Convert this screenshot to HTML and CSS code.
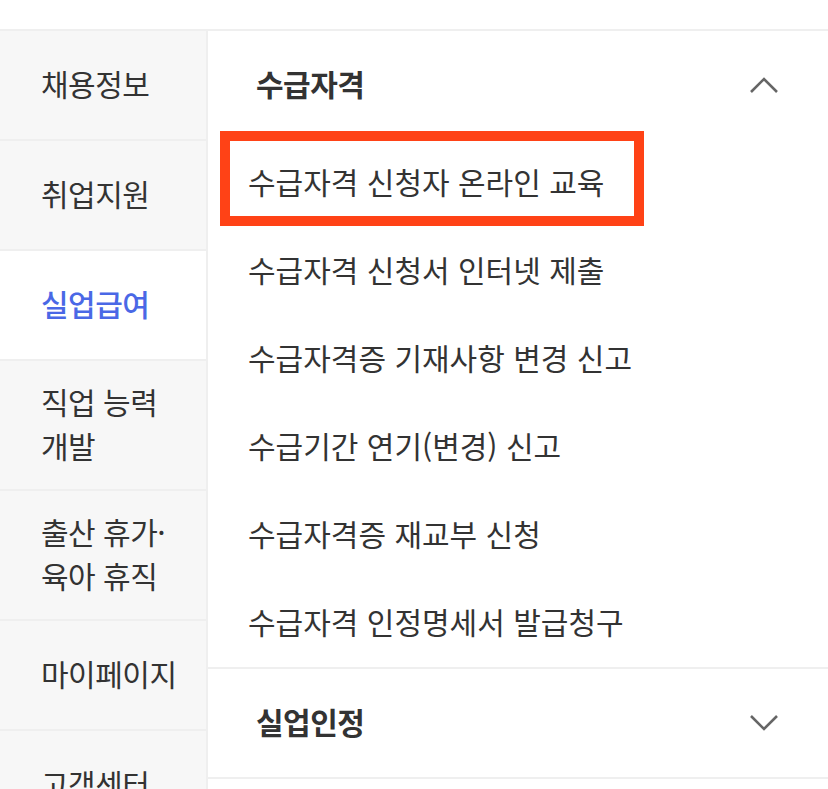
FILE: index.html
```html
<!DOCTYPE html>
<html lang="ko">
<head>
  <meta charset="UTF-8" />
  <meta name="viewport" content="width=device-width, initial-scale=1.0" />
  <title>실업급여 메뉴</title>
  <link rel="stylesheet" href="styles.css">
</head>
<body>
<div class="topbar"></div>
<div class="menu">
  <ul class="side">
    <li>채용정보</li>
    <li>취업지원</li>
    <li class="on">실업급여</li>
    <li>직업 능력<br>개발</li>
    <li>출산 휴가·<br>육아 휴직</li>
    <li>마이페이지</li>
    <li>고객센터</li>
  </ul>
  <div class="panel">
    <section class="group">
      <div class="group-head">
        <span>수급자격</span>
        <svg class="chev" width="30" height="18" viewBox="0 0 30 18"><polyline points="2,16 15,3 28,16" /></svg>
      </div>
      <ul class="sub">
        <li class="mark">수급자격 신청자 온라인 교육<span class="box"></span></li>
        <li>수급자격 신청서 인터넷 제출</li>
        <li>수급자격증 기재사항 변경 신고</li>
        <li>수급기간 연기(변경) 신고</li>
        <li>수급자격증 재교부 신청</li>
        <li>수급자격 인정명세서 발급청구</li>
      </ul>
    </section>
    <section class="group">
      <div class="group-head">
        <span>실업인정</span>
        <svg class="chev" width="30" height="18" viewBox="0 0 30 18"><polyline points="2,2 15,15 28,2" /></svg>
      </div>
    </section>
  </div>
</div>
</body>
</html>
```

FILE: styles.css
```css
* { box-sizing: border-box; margin: 0; padding: 0; }
html, body { width: 100%; height: 100%; overflow: hidden; background: #fff; }
body { font-family: "Noto Sans CJK KR", "Noto Sans", sans-serif; color: #333; }
ul { list-style: none; }

.topbar { height: 31px; border-bottom: 2px solid #efefef; }

.menu { display: flex; }

.side {
  width: 208px; flex: none;
  background: #f7f7f7;
  border-right: 2px solid #efefef;
}
.side li {
  display: flex; align-items: center;
  min-height: 110px;
  padding: 18px 0 22px 41px;
  border-bottom: 2px solid #efefef;
  font-size: 30px; line-height: 44px;
  letter-spacing: -0.5px;
}
.side li.on { background: #fff; color: #4a68e6; font-weight: 500; }

.panel { flex: 1; }
.group { border-bottom: 2px solid #efefef; }
.group-head {
  display: flex; justify-content: space-between; align-items: center;
  height: 108px;
  padding: 0 49px 0 48px;
  font-size: 30px; font-weight: 700; letter-spacing: -0.5px;
}
.group-head span { padding-bottom: 5px; }
.chev { fill: none; stroke: #666; stroke-width: 2.6; }

.sub li {
  position: relative;
  height: 88px; line-height: 84px;
  padding: 0 0 4px 40px;
  font-size: 30px;
}
.sub li .box {
  position: absolute; left: 12px; top: -8px;
  width: 424px; height: 95px;
  border: 10px solid #ff4216;
}
```
